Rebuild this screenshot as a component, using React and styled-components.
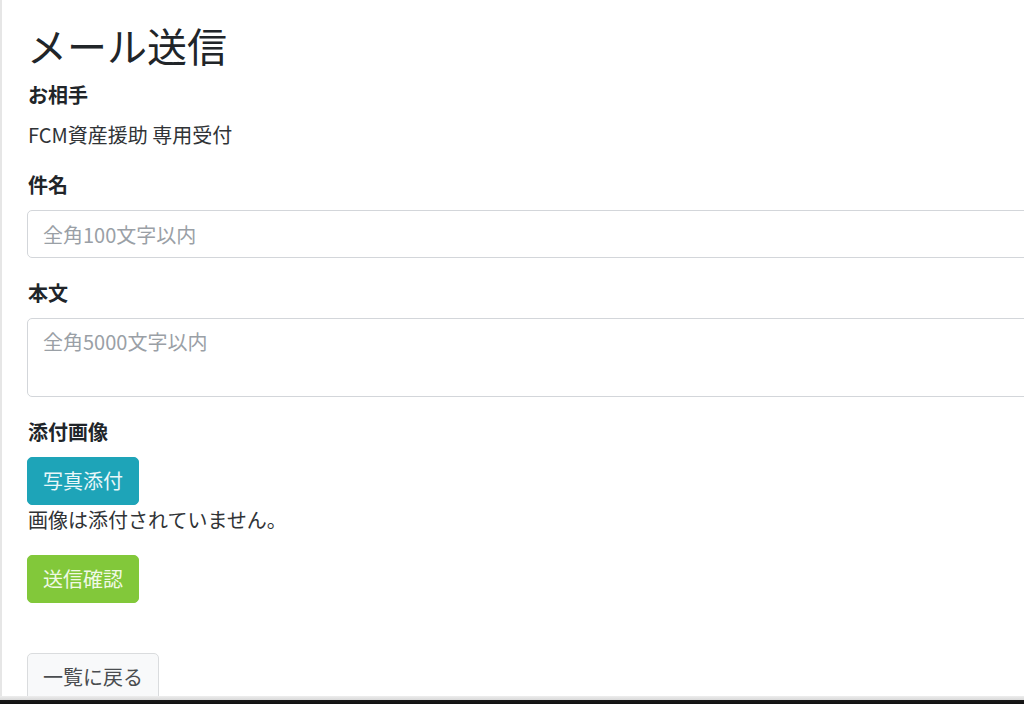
import React from "react";
import styled, { createGlobalStyle } from "styled-components";

const Global = createGlobalStyle`
  html, body { margin: 0; padding: 0; background: #fff; overflow: hidden; }
  body {
    font-family: "Noto Sans CJK JP", "Noto Sans", sans-serif;
    color: #212529;
  }
`;

const Frame = styled.div`
  width: 1024px;
  height: 704px;
  display: flex;
  flex-direction: column;
  overflow: hidden;
`;

const Viewport = styled.div`
  flex: 1;
  min-height: 0;
  overflow: hidden;
  border-left: 2px solid #e6e6e6;
  background: #fff;
`;

const Content = styled.main`
  width: 1140px;
  padding: 21px 0 0 25px;
  font-size: 20px;
  line-height: 30px;
`;

const Title = styled.h2`
  margin: 0 0 11px;
  font-size: 40px;
  font-weight: 400;
  line-height: 48px;
  color: #212529;
`;

const Group = styled.div`
  margin-bottom: ${(p) => p.$mb ?? 20}px;
`;

const Label = styled.label`
  display: block;
  margin: 0 0 10px;
  padding-left: 1px;
  font-weight: 700;
  font-size: 20px;
  line-height: 30px;
  color: #212529;
`;

const Plain = styled.div`
  padding-left: 1px;
  color: #303336;
`;

const Field = styled.input`
  display: block;
  box-sizing: border-box;
  width: 100%;
  height: 48px;
  padding: 7.5px 15px;
  font: inherit;
  font-size: 20px;
  line-height: 30px;
  border: 1px solid #d3d6da;
  border-radius: 5px;
  color: #495057;
  background: #fff;
  &::placeholder { color: #9aa0a6; }
`;

const Area = styled.textarea`
  display: block;
  box-sizing: border-box;
  width: 100%;
  height: 79px;
  padding: 7.5px 15px;
  font: inherit;
  font-size: 20px;
  line-height: 30px;
  border: 1px solid #d3d6da;
  border-radius: 5px;
  resize: none;
  color: #495057;
  &::placeholder { color: #9aa0a6; }
`;

const variants = {
  info: { bg: "#1ea4b8", border: "#1ea4b8", color: "#eaf7f9" },
  ok: { bg: "#82c83a", border: "#82c83a", color: "#f0f9e6" },
  light: { bg: "#f8f9fa", border: "#dadcde", color: "#4a4d50" },
};

const Button = styled.button`
  display: inline-block;
  box-sizing: border-box;
  height: 48px;
  padding: 7.5px 15px;
  font: inherit;
  font-size: 20px;
  line-height: 30px;
  border-radius: 5px;
  border: 1px solid ${(p) => variants[p.$v].border};
  background: ${(p) => variants[p.$v].bg};
  color: ${(p) => variants[p.$v].color};
  cursor: pointer;
`;

const Note = styled.div`
  padding-left: 1px;
  margin-bottom: 20px;
  color: #303336;
`;

const BackRow = styled.div`
  margin-top: 50px;
`;

const BottomEdge = styled.div`
  height: 8px;
  flex: none;
  background: linear-gradient(#ededed 0, #d9d9d9 4px, #1a1a1a 4px, #111 8px);
`;

export default function App() {
  return (
    <>
      <Global />
      <Frame>
        <Viewport>
          <Content>
            <Title>メール送信</Title>
            <Group>
              <Label>お相手</Label>
              <Plain>FCM資産援助 専用受付</Plain>
            </Group>
            <Group>
              <Label>件名</Label>
              <Field placeholder="全角100文字以内" />
            </Group>
            <Group>
              <Label>本文</Label>
              <Area placeholder="全角5000文字以内" rows={2} />
            </Group>
            <Group $mb={0}>
              <Label>添付画像</Label>
              <Button $v="info">写真添付</Button>
              <Note>画像は添付されていません。</Note>
            </Group>
            <Button $v="ok">送信確認</Button>
            <BackRow>
              <Button $v="light">一覧に戻る</Button>
            </BackRow>
          </Content>
        </Viewport>
        <BottomEdge />
      </Frame>
    </>
  );
}
